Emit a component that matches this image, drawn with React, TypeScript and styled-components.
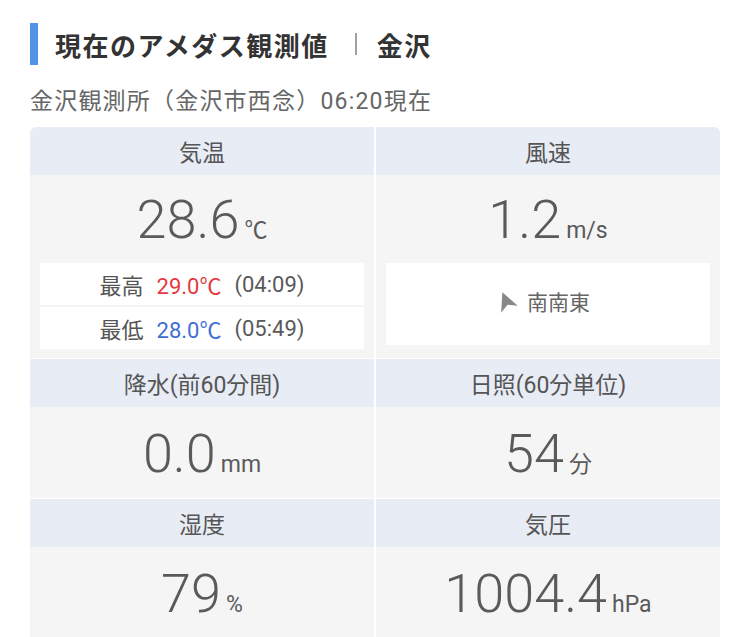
import styled, { createGlobalStyle } from "styled-components";

const GlobalStyle = createGlobalStyle`
  body {
    margin: 0;
    background: #fff;
    font-family: Roboto, "Noto Sans CJK JP", sans-serif;
  }
`;

const Page = styled.div`
  padding: 23px 30px 0;
`;

const Title = styled.h2`
  display: flex;
  align-items: center;
  height: 42px;
  margin: 0;
  padding-left: 17px;
  border-left: 8px solid #4f94e6;
  font-size: 26px;
  font-weight: 700;
  letter-spacing: 1.5px;
  color: #333;
`;

const TitleDivider = styled.span`
  display: inline-block;
  width: 2px;
  height: 22px;
  margin: 0 20px 0 26px;
  background: #a0a0a0;
`;

const Subtitle = styled.p`
  margin: 21px 0 9px;
  font-size: 23px;
  line-height: 32px;
  letter-spacing: 1.2px;
  color: #666;
`;

const Grid = styled.div`
  display: grid;
  grid-template-columns: 1fr 1fr;
  column-gap: 2px;
  row-gap: 1px;
  border-radius: 6px 6px 0 0;
  overflow: hidden;
`;

const Cell = styled.section`
  display: flex;
  flex-direction: column;
`;

const CellHeader = styled.div`
  display: flex;
  align-items: center;
  justify-content: center;
  height: 48px;
  background: #e8ecf5;
  color: #555;
  font-size: 23px;
`;

const CellBody = styled.div<{ $boxed?: boolean }>`
  flex: 1;
  display: flex;
  flex-direction: column;
  justify-content: center;
  min-height: 91px;
  padding: 0 10px ${(p) => (p.$boxed ? "9px" : "0")};
  background: #f5f5f5;
`;

const ValueLine = styled.div`
  display: flex;
  align-items: baseline;
  justify-content: center;
  box-sizing: border-box;
  height: 88px;
  padding-top: 3px;
  color: #5a5a5a;
`;

const Number = styled.span`
  font-weight: 300;
  font-size: 54px;
  line-height: 84px;
`;

const Unit = styled.span`
  margin-left: 5px;
  font-size: 23px;
  font-weight: 400;
`;

const ExtremeList = styled.div`
  display: flex;
  flex-direction: column;
  gap: 2px;
`;

const ExtremeRow = styled.div`
  display: flex;
  align-items: center;
  justify-content: center;
  gap: 13px;
  height: 42px;
  background: #fff;
  font-size: 22px;
  color: #555;
`;

const ExtremeValue = styled.span<{ $tone: "high" | "low" }>`
  color: ${(p) => (p.$tone === "high" ? "#e23a40" : "#3f6fd3")};
`;

const ExtremeTime = styled.span`
  color: #5a5a5a;
`;

const WindBox = styled.div`
  flex: 1;
  display: flex;
  align-items: center;
  justify-content: center;
  gap: 9px;
  margin-bottom: 4px;
  padding: 0 12px 6px 0;
  background: #fff;
  font-size: 21px;
  color: #666;
`;

const WindArrow = ({ deg }: { deg: number }) => (
  <svg width="24" height="24" viewBox="0 0 24 24">
    <polygon
      points="12,2.5 21,21 12,16 3,21"
      fill="#888"
      transform={`rotate(${deg} 12 12)`}
    />
  </svg>
);

const plainCells = [
  { label: "降水(前60分間)", value: "0.0", unit: "mm" },
  { label: "日照(60分単位)", value: "54", unit: "分" },
  { label: "湿度", value: "79", unit: "%" },
  { label: "気圧", value: "1004.4", unit: "hPa" },
];

export default function App() {
  return (
    <Page>
      <GlobalStyle />
      <Title>
        現在のアメダス観測値
        <TitleDivider />
        金沢
      </Title>
      <Subtitle>金沢観測所（金沢市西念）06:20現在</Subtitle>

      <Grid>
        <Cell>
          <CellHeader>気温</CellHeader>
          <CellBody $boxed>
            <ValueLine>
              <Number>28.6</Number>
              <Unit>℃</Unit>
            </ValueLine>
            <ExtremeList>
              <ExtremeRow>
                <span>最高</span>
                <ExtremeValue $tone="high">29.0℃</ExtremeValue>
                <ExtremeTime>(04:09)</ExtremeTime>
              </ExtremeRow>
              <ExtremeRow>
                <span>最低</span>
                <ExtremeValue $tone="low">28.0℃</ExtremeValue>
                <ExtremeTime>(05:49)</ExtremeTime>
              </ExtremeRow>
            </ExtremeList>
          </CellBody>
        </Cell>

        <Cell>
          <CellHeader>風速</CellHeader>
          <CellBody $boxed>
            <ValueLine>
              <Number>1.2</Number>
              <Unit>m/s</Unit>
            </ValueLine>
            <WindBox>
              <WindArrow deg={-22.5} />
              <span>南南東</span>
            </WindBox>
          </CellBody>
        </Cell>

        {plainCells.map((c) => (
          <Cell key={c.label}>
            <CellHeader>{c.label}</CellHeader>
            <CellBody>
              <ValueLine>
                <Number>{c.value}</Number>
                <Unit>{c.unit}</Unit>
              </ValueLine>
            </CellBody>
          </Cell>
        ))}
      </Grid>
    </Page>
  );
}
